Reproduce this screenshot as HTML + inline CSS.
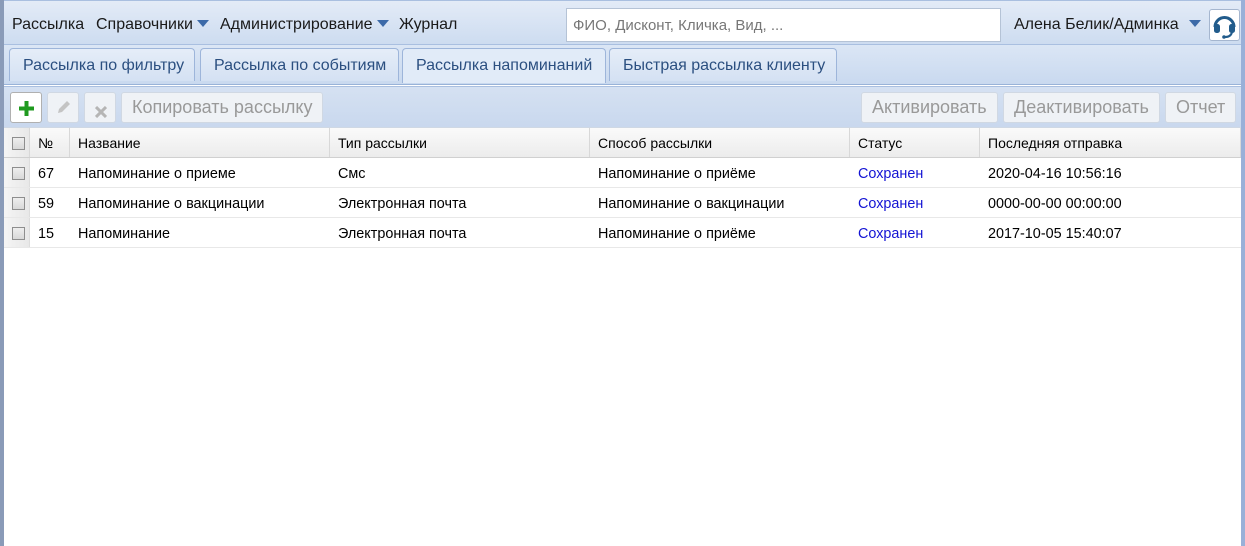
<!DOCTYPE html>
<html><head><meta charset="utf-8"><style>
*{box-sizing:border-box;margin:0;padding:0}
body{width:1245px;height:546px;overflow:hidden;font-family:"Liberation Sans",Arial,sans-serif;font-size:13px;color:#000;background:#fff;position:relative}
.frame{position:absolute;left:0;top:0;width:1245px;height:546px;border-left:4px solid #8a9bb8;border-right:4px solid #99b0d8}
.top{position:absolute;left:4px;top:0;width:1237px;height:45px;background:linear-gradient(#e3ebf7,#cddcf0);border-top:1px solid #a9bfe0;border-bottom:1px solid #a9bfe0}
.m{position:absolute;top:15px;font-size:16px;color:#1a1a1a}
.tri{display:inline-block;width:0;height:0;border-left:6px solid transparent;border-right:6px solid transparent;border-top:7px solid #3c6aa8;margin-left:4px;vertical-align:2px}
.search{position:absolute;left:566px;top:8px;width:435px;height:34px;background:#fff;border:1px solid #b5c3d6;font-size:15px;color:#777;padding:8px 6px}
.help{position:absolute;left:1209px;top:9px;width:31px;height:32px;border:1px solid #a5b6cf;border-radius:3px;background:#fff}
.tabs{position:absolute;left:4px;top:45px;width:1237px;height:40px;background:linear-gradient(#dbe6f5,#c9d9ef);border-bottom:1px solid #99b3d8}
.tab{position:absolute;top:3px;height:33px;border:1px solid #9db5da;border-bottom:none;border-radius:4px 4px 0 0;background:linear-gradient(#e5edf8,#d4e1f3);font-size:16px;color:#2b4f80;padding:8px 13px 0;white-space:nowrap}
.tab.act{background:#e1ebf8;height:35px}
.tb{position:absolute;left:4px;top:86px;width:1237px;height:41px;background:linear-gradient(#d5e1f2,#c9d8ee);border-top:1px solid #a9bfe0}
.btn{position:absolute;top:5px;height:31px;border:1px solid #d0d8e3;border-radius:3px;background:#eff2f6;font-size:18px;color:#999;padding:4px 10px 0;white-space:nowrap}
.grid{position:absolute;left:4px;top:127px;width:1237px}
.row{position:relative;height:30px;border-bottom:1px solid #e8e8e8}
.hd{height:31px;background:linear-gradient(#fafafa,#ececec);border-top:1px solid #cfd8e4;border-bottom:1px solid #d0d0d0}
.c{position:absolute;top:0;height:100%;padding:8px 8px 0;font-size:14.4px;white-space:nowrap}
.hd .c{border-right:1px solid #d8d8d8;font-size:14px;padding-top:7px}
.cb0{left:0;width:26px;background:linear-gradient(90deg,#f5f5f5,#e8e8e8);border-right:1px solid #ddd}
.cb{position:absolute;left:8px;top:9px;width:13px;height:13px;border:1px solid #8e8e8e;background:linear-gradient(#eee,#d8d8d8)}
.blue{color:#1414d4}
</style></head><body>
<div class="frame"></div>
<div class="top">
<span class="m" style="left:8px">Рассылка</span>
<span class="m" style="left:92px">Справочники<span class="tri"></span></span>
<span class="m" style="left:216px">Администрирование<span class="tri"></span></span>
<span class="m" style="left:395px">Журнал</span>
<span class="m" style="left:1010px">Алена Белик/Админка<span class="tri" style="margin-left:10px"></span></span>
</div>
<div class="search">ФИО, Дисконт, Кличка, Вид, ...</div>
<div class="help"><svg width="29" height="30" viewBox="0 0 29 30"><path d="M5 17 A9.5 9.5 0 0 1 24 17" fill="none" stroke="#225c8c" stroke-width="3"/><rect x="4" y="14" width="6" height="9" rx="2.5" fill="#225c8c"/><rect x="19" y="14" width="6" height="9" rx="2.5" fill="#225c8c"/><path d="M22 22 Q21 27 15 27" fill="none" stroke="#225c8c" stroke-width="2"/><circle cx="14" cy="27" r="1.8" fill="#225c8c"/></svg></div>
<div class="tabs">
<div class="tab" style="left:5px;width:186px">Рассылка по фильтру</div>
<div class="tab" style="left:196px;width:199px">Рассылка по событиям</div>
<div class="tab act" style="left:398px;width:204px">Рассылка напоминаний</div>
<div class="tab" style="left:605px;width:228px">Быстрая рассылка клиенту</div>
</div>
<div class="tb">
<div class="btn" style="left:6px;width:32px;background:#fff;border-color:#b0b0b0;padding:7px 0 0 8px"><svg width="15" height="15"><path d="M7.5 0V15M0 7.5H15" stroke="#1f9a1f" stroke-width="4"/></svg></div>
<div class="btn" style="left:43px;width:32px;padding:6px 0 0 8px"><svg width="16" height="16"><path d="M2 14L3 10L11 2L14 5L6 13Z" fill="#c4c4c4"/></svg></div>
<div class="btn" style="left:80px;width:32px;padding:9px 0 0 10px"><svg width="12" height="12"><path d="M1 1L11 11M11 1L1 11" stroke="#b5b5b5" stroke-width="3"/></svg></div>
<div class="btn" style="left:117px;width:202px">Копировать рассылку</div>
<div class="btn" style="left:857px;width:137px">Активировать</div>
<div class="btn" style="left:999px;width:157px">Деактивировать</div>
<div class="btn" style="left:1161px;width:71px">Отчет</div>
</div>
<div class="grid">
<div class="row hd"><div class="c cb0"><div class="cb"></div></div><div class="c" style="left:26px;width:40px">№</div><div class="c" style="left:66px;width:260px">Название</div><div class="c" style="left:326px;width:260px">Тип рассылки</div><div class="c" style="left:586px;width:260px">Способ рассылки</div><div class="c" style="left:846px;width:130px">Статус</div><div class="c" style="left:976px;width:261px">Последняя отправка</div></div>
<div class="row"><div class="c cb0"><div class="cb"></div></div><div class="c" style="left:26px">67</div><div class="c" style="left:66px">Напоминание о приеме</div><div class="c" style="left:326px">Смс</div><div class="c" style="left:586px">Напоминание о приёме</div><div class="c blue" style="left:846px">Сохранен</div><div class="c" style="left:976px">2020-04-16 10:56:16</div></div>
<div class="row"><div class="c cb0"><div class="cb"></div></div><div class="c" style="left:26px">59</div><div class="c" style="left:66px">Напоминание о вакцинации</div><div class="c" style="left:326px">Электронная почта</div><div class="c" style="left:586px">Напоминание о вакцинации</div><div class="c blue" style="left:846px">Сохранен</div><div class="c" style="left:976px">0000-00-00 00:00:00</div></div>
<div class="row"><div class="c cb0"><div class="cb"></div></div><div class="c" style="left:26px">15</div><div class="c" style="left:66px">Напоминание</div><div class="c" style="left:326px">Электронная почта</div><div class="c" style="left:586px">Напоминание о приёме</div><div class="c blue" style="left:846px">Сохранен</div><div class="c" style="left:976px">2017-10-05 15:40:07</div></div>
</div>
</body></html>
